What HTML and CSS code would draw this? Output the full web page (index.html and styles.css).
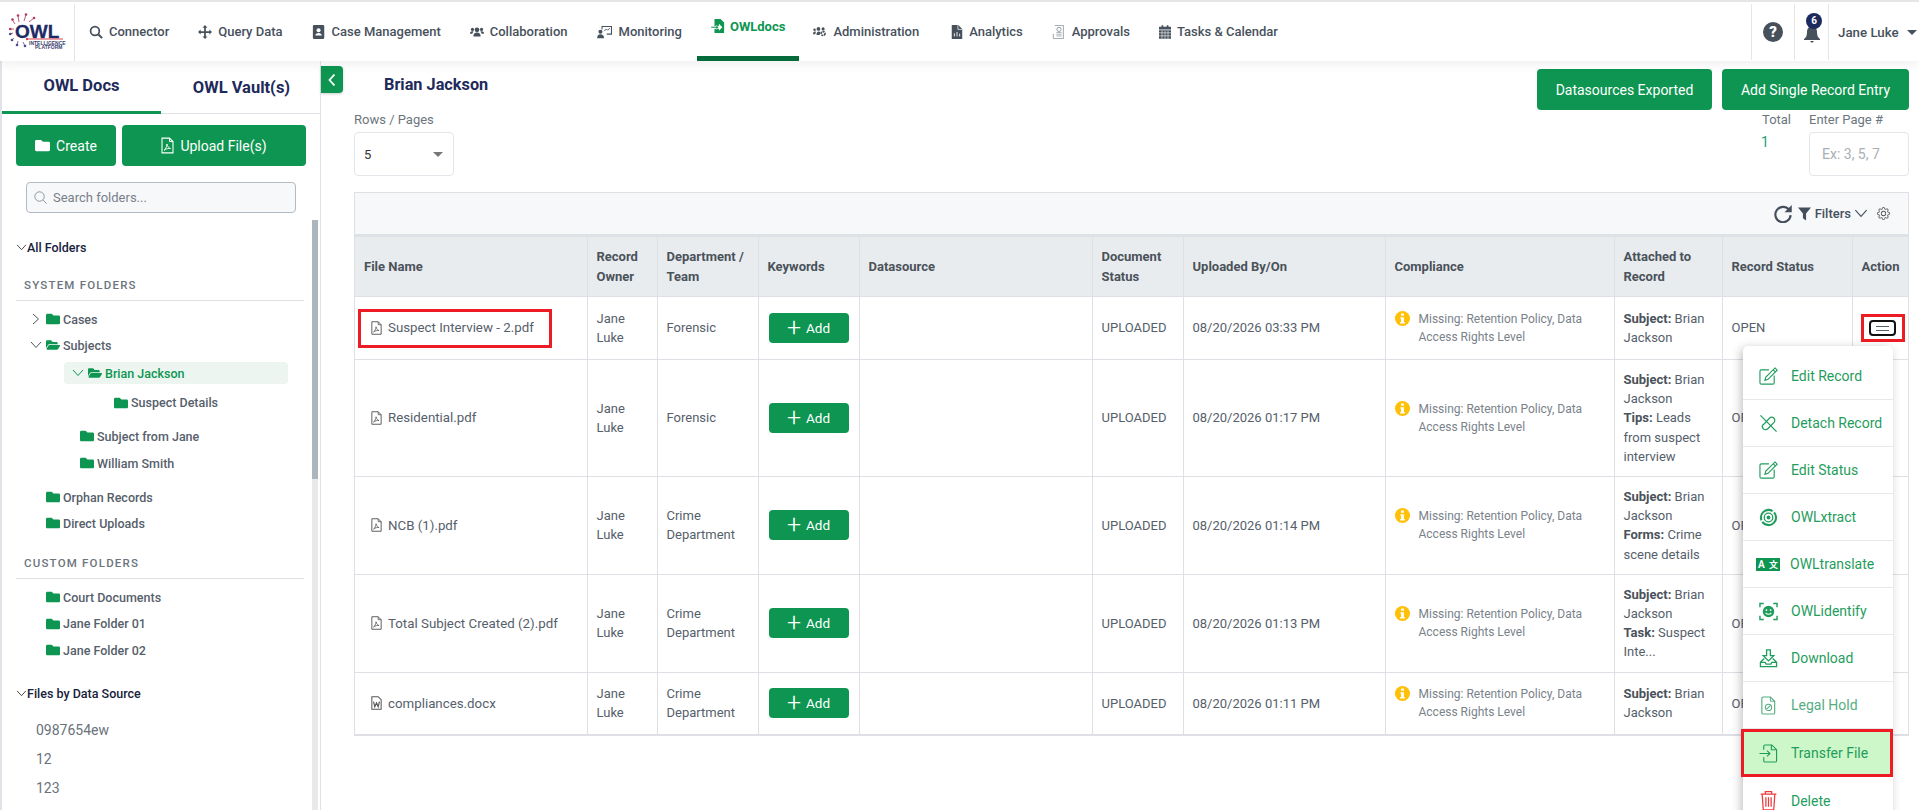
FILE: index.html
```html
<!DOCTYPE html>
<html lang="en">
<head>
<meta charset="utf-8">
<title>OWLdocs</title>
<link rel="stylesheet" href="styles.css">
</head>
<body>
<svg class="defs" aria-hidden="true">
  <symbol id="folder" viewBox="0 0 512 512"><path d="M464 128H272l-64-64H48C21.49 64 0 85.49 0 112v288c0 26.51 21.49 48 48 48h416c26.51 0 48-21.49 48-48V176c0-26.51-21.49-48-48-48z"/></symbol>
  <symbol id="folder-open" viewBox="0 0 576 512"><path d="M572.694 292.093L500.27 416.248A63.997 63.997 0 0 1 444.989 448H45.025c-18.523 0-30.064-20.093-20.731-36.093l72.424-124.155A64 64 0 0 1 152 256h399.964c18.523 0 30.064 20.093 20.73 36.093zM152 224h328v-48c0-26.51-21.49-48-48-48H272l-64-64H48C21.49 64 0 85.49 0 112v278.046l69.077-118.418C86.214 242.25 117.989 224 152 224z"/></symbol>
  <symbol id="chev-down" viewBox="0 0 12 8"><path d="M1 1l5 5.500L11 1" fill="none" stroke="currentColor" stroke-width="1"/></symbol>
  <symbol id="chev-right" viewBox="0 0 8 12"><path d="M1 1l5.500 5L1 11" fill="none" stroke="currentColor" stroke-width="1"/></symbol>
  <symbol id="pdf" viewBox="1.500 0 13 16"><path d="M2.500 .6h7.500l3.500 3.500v11.300h-11z" fill="none" stroke="currentColor" stroke-width="1.100"/><path d="M10 .6v3.500h3.500" fill="none" stroke="currentColor" stroke-width="1"/><path d="M4.500 12.800c1.500-1 2.500-3 3-6.300 .5 2.500 1.500 4 3.500 4.500-2-.3-4.500.2-6.500 1.800z" fill="none" stroke="currentColor" stroke-width=".9"/></symbol>
  <symbol id="word" viewBox="1.500 0 13 16"><path d="M2.500 .6h7.500l3.500 3.500v11.300h-11z" fill="none" stroke="currentColor" stroke-width="1.200"/><path d="M4.500 6.500l1.500 6 2-4.500 2 4.500 1.500-6" fill="none" stroke="currentColor" stroke-width="1.400"/></symbol>
  <symbol id="edit" viewBox="0 0 20 20"><g fill="none" stroke="currentColor" stroke-width="1.200"><path d="M10.500 3H2.500A1.500 1.500 0 0 0 1 4.500v12A1.500 1.500 0 0 0 2.500 18h12a1.500 1.500 0 0 0 1.500-1.500V9"/><path d="M16.800 1l2.300 2.300-9.600 9.700-3.300 1 1-3.300zM15 3l2.200 2.200"/></g></symbol>
  <symbol id="detach" viewBox="0 0 20 20"><g fill="none" stroke="currentColor" stroke-width="1.300"><path d="M5 11l6-6.500a3.200 3.200 0 0 1 4.800 4.300l-6.500 6.700a3.200 3.200 0 0 1-4.800-4.500z"/><path d="M1.500 1.500l17 17"/></g></symbol>
  <symbol id="xtract" viewBox="0 0 20 20"><g fill="none" stroke="currentColor"><circle cx="10" cy="10" r="8" stroke-width="2.200" stroke-dasharray="20 2"/><circle cx="10" cy="10" r="4.500" stroke-width="1.300"/></g><circle cx="10" cy="10" r="2"/></symbol>
  <symbol id="identify" viewBox="0 0 20 20"><path d="M1 5.500V1.500h4M15 1.500h4v4M19 14.500v4h-4M5 18.500H1v-4" fill="none" stroke="currentColor" stroke-width="1.500"/><circle cx="10" cy="10" r="6"/><g fill="#fff"><circle cx="7.800" cy="8.500" r="1"/><circle cx="12.200" cy="8.500" r="1"/></g><path d="M7 11.500c1.500 2 4.500 2 6 0" fill="none" stroke="#fff" stroke-width="1.100"/></symbol>
  <symbol id="download" viewBox="0 0 20 20"><path d="M8 1h4v6h3.500L10 12.500 4.500 7H8z" fill="none" stroke="currentColor" stroke-width="1.400"/><path d="M5.500 10L1.500 14v4.500h17V14l-4-4M1.500 14h5l1 2h5l1-2h5" fill="none" stroke="currentColor" stroke-width="1.400"/></symbol>
  <symbol id="hold" viewBox="0 0 16 20"><path d="M2.500 1h7.500l4.500 4.500v12a1.500 1.500 0 0 1-1.500 1.500h-10.500a1.500 1.500 0 0 1-1.500-1.500v-15a1.500 1.500 0 0 1 1.500-1.500z" fill="none" stroke="currentColor" stroke-width="1.200"/><path d="M10 1v4.500h4.500" fill="none" stroke="currentColor"/><circle cx="8" cy="12" r="3.300" fill="none" stroke="currentColor" stroke-width="1.100"/><path d="M5.800 14.200l4.400-4.400" stroke="currentColor" stroke-width="1.100"/></symbol>
  <symbol id="transfer" viewBox="0 0 20 20"><path d="M5 6V2.500A1.500 1.500 0 0 1 6.500 1h7l5 5v11.500a1.500 1.500 0 0 1-1.500 1.500h-10.500a1.500 1.500 0 0 1-1.500-1.500V14" fill="none" stroke="currentColor" stroke-width="1.200"/><path d="M13 1v5h5.500M0.500 10h11M8.500 7l3 3-3 3" fill="none" stroke="currentColor" stroke-width="1.200"/></symbol>
  <symbol id="trash" viewBox="0 0 16 20"><g fill="none" stroke="currentColor" stroke-width="1.200"><path d="M.5 4h15M5 4V1.500h6V4M2 4l1 15h10l1-15"/><path d="M5.500 7v9M8 7v9M10.500 7v9"/></g></symbol>
  <symbol id="info" viewBox="0 0 18 18"><circle cx="9" cy="9" r="8"/><path d="M7.500 3.800h3v2.400h-3zM6.800 7.600h3.700v5h1v1.700h-5v-1.700h1v-3.300h-.7z" fill="#fff"/></symbol>
</svg>

<header class="topbar">
  <div class="logo">
    <svg viewBox="0 0 56 38" class="logo-svg">
      <g fill="none" stroke="#a8325d" stroke-width=".8"><path d="M10 9L9 3M15 8l2-6.500M20 9l5-4M6 11L3.500 7M5 16H1"/></g>
      <g fill="none" stroke="#5a4a8e" stroke-width=".8"><path d="M4 20l-3 1M5 25l-2 2M9 28l-1 4M14 29l2 4"/></g>
      <g fill="#b63a5e"><circle cx="9" cy="2.500" r="1.300"/><circle cx="17" cy="1.500" r="1.300"/><circle cx="25" cy="5" r="1.300"/><circle cx="3.500" cy="6.500" r="1.300"/><circle cx="1.200" cy="16" r="1.300"/></g>
      <g fill="#4e4a8a"><circle cx="1.200" cy="21" r="1.300"/><circle cx="3" cy="27" r="1.300"/><circle cx="8" cy="32" r="1.300"/><circle cx="16" cy="33" r="1.300"/></g>
      <text x="6" y="25" class="logo-owl">OWL</text>
      <path d="M18 26H54" stroke="#d8434e" stroke-width="1"/>
      <circle cx="18" cy="26" r="1.200" fill="#d8434e"/>
      <text x="20" y="31.500" class="logo-small">INTELLIGENCE</text>
      <text x="26" y="36" class="logo-small">PLATFORM</text>
    </svg>
  </div>
  <nav class="nav">
    <a class="nav-item nav-connector"><svg class="nav-ico" viewBox="0 0 16 16"><circle cx="6.800" cy="6.800" r="5" fill="none" stroke="currentColor" stroke-width="2"/><path d="M10.500 10.500L15 15" stroke="currentColor" stroke-width="2.400"/></svg>Connector</a>
    <a class="nav-item"><svg class="nav-ico" viewBox="0 0 16 16"><path d="M8 0l2.800 3H9v4h4V5.200L16 8l-3 2.800V9H9v4h1.800L8 16l-2.800-3H7V9H3v1.800L0 8l3-2.800V7h4V3H5.200z"/></svg>Query Data</a>
    <a class="nav-item"><svg class="nav-ico" viewBox="0 0 14 16"><path d="M1.500 0h10A1.500 1.500 0 0 1 13 1.500v13a1.500 1.500 0 0 1-1.500 1.500h-10A1.500 1.500 0 0 1 0 14.500v-13A1.500 1.500 0 0 1 1.500 0z"/><circle cx="6.500" cy="6" r="2.300" fill="#fff"/><path d="M2.800 12c0-2 1.700-3 3.700-3s3.700 1 3.700 3z" fill="#fff"/></svg>Case Management</a>
    <a class="nav-item"><svg class="nav-ico" viewBox="0 0 16 12"><circle cx="8" cy="3.500" r="2.700"/><circle cx="2.800" cy="3" r="1.800"/><circle cx="13.200" cy="3" r="1.800"/><path d="M3.800 11c0-3 1.700-4.500 4.200-4.500s4.200 1.500 4.200 4.500zM0 8c0-2 1-2.800 2.800-2.800.5 0 1 .1 1.300.4C3.200 6.300 2.700 7 2.600 8zM16 8c0-2-1-2.800-2.800-2.800-.5 0-1 .1-1.300.4.900.7 1.400 1.400 1.500 2.400z"/></svg>Collaboration</a>
    <a class="nav-item"><svg class="nav-ico nav-ico-wide" viewBox="0 0 18 16"><path d="M5 1h12v10h-6V9.800h4.800V2.200H6.200V5H5z"/><path d="M8 7l2.500-2.500 1.500 1.500 2.500-2.500" fill="none" stroke="currentColor"/><circle cx="3.800" cy="7.800" r="2.300"/><path d="M0 15c0-3 1.500-4.500 3.800-4.500S8 12 8 15z"/></svg>Monitoring</a>
    <a class="nav-item nav-active"><svg class="nav-ico" viewBox="0 0 16 16"><path d="M4 0h7l4 4v12H4v-5h5v2.500L13 9.500l-4-4V8H4z"/><path d="M0 8.700h6V7l3 2.500-3 2.500v-1.700H0z" class="active-arrow"/></svg>OWLdocs</a>
    <a class="nav-item nav-admin"><svg class="nav-ico" viewBox="0 0 18 14"><circle cx="7" cy="3" r="2.400"/><circle cx="2" cy="4" r="1.600"/><path d="M0 10c0-2.500 1-3.500 2.500-3.500h1.200L3 10zM4.500 11c0-3 1-4.500 3-4.500 1 0 1.500.3 2 .8L8.500 11z"/><circle cx="13" cy="9" r="2.500" fill="none" stroke="currentColor" stroke-width="2.200" stroke-dasharray="2.500 .8"/><circle cx="13" cy="3" r="2"/></svg>Administration</a>
    <a class="nav-item"><svg class="nav-ico nav-ico-narrow" viewBox="0 0 12 16"><path d="M0 0h7.500L12 4.500V16H0z"/><path d="M7 0v5h5" fill="none" stroke="#fff" stroke-width=".8"/><path d="M3 13V9.500M6 13V8M9 13v-3" stroke="#fff"/></svg>Analytics</a>
    <a class="nav-item"><svg class="nav-ico nav-ico-gray" viewBox="0 0 14 16"><path d="M2 .5h10v15H.5V10" fill="none" stroke="currentColor" stroke-width=".9"/><circle cx="7" cy="5" r="2.400" fill="none" stroke="currentColor"/><path d="M4 8.500h6M4 10.500h6M4 12.500h6" stroke="currentColor" stroke-width=".8"/></svg>Approvals</a>
    <a class="nav-item"><svg class="nav-ico nav-ico-narrow" viewBox="0 0 14 16"><path d="M3 0h2v2h4V0h2v2h3v3H0V2h3zM0 6h14v10H0z"/><path d="M0 9h14M0 12.500h14M3.500 6v10M7 6v10M10.500 6v10" stroke="#fff" stroke-width=".7"/></svg>Tasks &amp; Calendar</a>
  </nav>
  <div class="top-right">
    <div class="top-cell help-cell"><span class="help">?</span></div>
    <div class="top-cell bell-cell">
      <svg class="bell" viewBox="0 0 16 18"><path d="M8 0c1 0 1.500.6 1.500 1.500C12 2.200 13 4.500 13 7c0 4 1 5.500 3 7v1H0v-1c2-1.500 3-3 3-7 0-2.500 1-4.800 3.500-5.500C6.500.6 7 0 8 0z"/><path d="M6 16h4l-2 2z"/></svg>
      <span class="badge">6</span>
    </div>
    <div class="top-cell user-cell">Jane Luke<span class="caret"></span></div>
  </div>
</header>

<div class="main">
  <aside class="sidebar">
    <div class="tabs">
      <div class="tab tab-active">OWL Docs</div>
      <div class="tab tab-other">OWL Vault(s)</div>
    </div>
    <div class="side-actions">
      <button class="btn btn-create"><svg class="btn-ico" viewBox="0 0 512 512"><use href="#folder"/></svg>Create</button>
      <button class="btn btn-upload"><svg class="btn-ico btn-ico-pdf"><use href="#pdf"/></svg>Upload File(s)</button>
    </div>
    <div class="side-search">
      <svg class="search-ico" viewBox="0 0 16 16"><circle cx="6.800" cy="6.800" r="5.800" fill="none" stroke="currentColor"/><path d="M11 11l4.500 4.500" stroke="currentColor"/></svg>
      <span>Search folders...</span>
    </div>
    <div class="tree-wrap">
      <div class="tree">
        <div class="tree-head head-all"><svg class="chev-head"><use href="#chev-down"/></svg>All Folders</div>
        <div class="section section-system">SYSTEM FOLDERS</div>
        <div class="row r26 mt5 pad-cases"><svg class="chev chev-r"><use href="#chev-right"/></svg><svg class="fld"><use href="#folder"/></svg>Cases</div>
        <div class="row r26 pad-subjects"><svg class="chev chev-d"><use href="#chev-down"/></svg><svg class="fld"><use href="#folder-open"/></svg>Subjects</div>
        <div class="row selected"><svg class="chev chev-d"><use href="#chev-down"/></svg><svg class="fld"><use href="#folder-open"/></svg>Brian Jackson</div>
        <div class="row r29 mt3 pad-deep"><svg class="fld"><use href="#folder"/></svg>Suspect Details</div>
        <div class="row r27 mt6 pad-child"><svg class="fld"><use href="#folder"/></svg>Subject from Jane</div>
        <div class="row r27 pad-child"><svg class="fld"><use href="#folder"/></svg>William Smith</div>
        <div class="row r26 mt8 pad-root"><svg class="fld"><use href="#folder"/></svg>Orphan Records</div>
        <div class="row r26 pad-root"><svg class="fld"><use href="#folder"/></svg>Direct Uploads</div>
        <div class="section section-custom">CUSTOM FOLDERS</div>
        <div class="row r26 mt5 pad-root"><svg class="fld"><use href="#folder"/></svg>Court Documents</div>
        <div class="row r27 pad-root"><svg class="fld"><use href="#folder"/></svg>Jane Folder 01</div>
        <div class="row r26 pad-root"><svg class="fld"><use href="#folder"/></svg>Jane Folder 02</div>
        <div class="tree-head head-files"><svg class="chev-head"><use href="#chev-down"/></svg>Files by Data Source</div>
        <div class="src first-src">0987654ew</div>
        <div class="src">12</div>
        <div class="src">123</div>
      </div>
      <div class="scroll-track"><div class="scroll-thumb"></div></div>
    </div>
  </aside>

  <section class="content">
    <button class="collapse" aria-label="Collapse"><svg viewBox="0 0 8 14"><path d="M6.500 1.500L1.500 7l5 5.500" fill="none" stroke="#fff" stroke-width="1.800"/></svg></button>
    <div class="head-row">
      <h1 class="title">Brian Jackson</h1>
      <div class="head-btns">
        <button class="btn btn-export">Datasources Exported</button>
        <button class="btn btn-add-record">Add Single Record Entry</button>
      </div>
    </div>
    <div class="filter-row">
      <div class="field">
        <label class="lbl">Rows / Pages</label>
        <div class="select"><span>5</span><span class="select-caret"></span></div>
      </div>
      <div class="pager">
        <div class="field total"><label class="lbl">Total</label><span class="total-val">1</span></div>
        <div class="field"><label class="lbl">Enter Page #</label><div class="page-input">Ex: 3, 5, 7</div></div>
      </div>
    </div>

    <div class="table-box">
      <div class="toolbar">
        <svg class="tool-ico tool-refresh" viewBox="0 0 16 16"><path d="M13.300 4.200A6.800 6.800 0 1 0 14.800 9" fill="none" stroke="currentColor" stroke-width="1.900"/><path d="M15.800 0v6.500h-6.500z"/></svg>
        <svg class="tool-ico tool-filter" viewBox="0 0 14 14"><path d="M0 0h14L8.700 6.500V14L5.300 11.500V6.500z"/></svg>
        <span class="tool-text">Filters</span>
        <svg class="tool-chev"><use href="#chev-down"/></svg>
        <svg class="tool-gear" viewBox="0 0 16 16"><path d="M8 4.754a3.246 3.246 0 1 0 0 6.492 3.246 3.246 0 0 0 0-6.492zM5.754 8a2.246 2.246 0 1 1 4.492 0 2.246 2.246 0 0 1-4.492 0z"/><path d="M9.796 1.343c-.527-1.790-3.065-1.790-3.592 0l-.094.319a.873.873 0 0 1-1.255.52l-.292-.16c-1.640-.892-3.433.902-2.540 2.541l.159.292a.873.873 0 0 1-.52 1.255l-.319.094c-1.790.527-1.790 3.065 0 3.592l.319.094a.873.873 0 0 1 .52 1.255l-.16.292c-.892 1.640.901 3.434 2.541 2.540l.292-.159a.873.873 0 0 1 1.255.52l.094.319c.527 1.790 3.065 1.790 3.592 0l.094-.319a.873.873 0 0 1 1.255-.52l.292.16c1.640.893 3.434-.902 2.540-2.541l-.159-.292a.873.873 0 0 1 .52-1.255l.319-.094c1.790-.527 1.790-3.065 0-3.592l-.319-.094a.873.873 0 0 1-.52-1.255l.16-.292c.893-1.640-.902-3.433-2.541-2.540l-.292.159a.873.873 0 0 1-1.255-.52l-.094-.319zm-2.633.283c.246-.835 1.428-.835 1.674 0l.094.319a1.873 1.873 0 0 0 2.693 1.115l.291-.16c.764-.415 1.600.42 1.184 1.185l-.159.292a1.873 1.873 0 0 0 1.116 2.692l.318.094c.835.246.835 1.428 0 1.674l-.319.094a1.873 1.873 0 0 0-1.115 2.693l.16.291c.415.764-.42 1.600-1.185 1.184l-.291-.159a1.873 1.873 0 0 0-2.693 1.116l-.094.318c-.246.835-1.428.835-1.674 0l-.094-.319a1.873 1.873 0 0 0-2.692-1.115l-.292.16c-.764.415-1.600-.42-1.184-1.185l.159-.291A1.873 1.873 0 0 0 1.945 8.930l-.319-.094c-.835-.246-.835-1.428 0-1.674l.319-.094A1.873 1.873 0 0 0 3.060 4.377l-.16-.292c-.415-.764.42-1.600 1.185-1.184l.292.159a1.873 1.873 0 0 0 2.692-1.115l.094-.319z"/></svg>
      </div>
      <table class="grid">
        <colgroup>
          <col class="c-file"><col class="c-owner"><col class="c-dept"><col class="c-key"><col class="c-ds"><col class="c-doc"><col class="c-up"><col class="c-comp"><col class="c-att"><col class="c-stat"><col class="c-act">
        </colgroup>
        <thead>
          <tr><th>File Name</th><th>Record Owner</th><th>Department / Team</th><th>Keywords</th><th>Datasource</th><th>Document Status</th><th>Uploaded By/On</th><th>Compliance</th><th>Attached to Record</th><th>Record Status</th><th>Action</th></tr>
        </thead>
        <tbody>
          <tr class="row-a">
            <td class="cell-file"><div class="file marked"><svg class="f-ico"><use href="#pdf"/></svg>Suspect Interview - 2.pdf</div></td>
            <td>Jane Luke</td><td>Forensic</td>
            <td><button class="btn btn-addk"><span class="plus">+</span>Add</button></td><td></td>
            <td>UPLOADED</td><td>08/20/2026 03:33 PM</td>
            <td><div class="comp"><svg class="info"><use href="#info"/></svg><span>Missing: Retention Policy, Data Access Rights Level</span></div></td>
            <td><b>Subject:</b> Brian Jackson</td><td>OPEN</td>
            <td class="cell-act"><span class="act-mark"><span class="act-btn"><i></i><i></i></span></span></td>
          </tr>
          <tr>
            <td class="cell-file"><div class="file"><svg class="f-ico"><use href="#pdf"/></svg>Residential.pdf</div></td>
            <td>Jane Luke</td><td>Forensic</td>
            <td><button class="btn btn-addk"><span class="plus">+</span>Add</button></td><td></td>
            <td>UPLOADED</td><td>08/20/2026 01:17 PM</td>
            <td><div class="comp"><svg class="info"><use href="#info"/></svg><span>Missing: Retention Policy, Data Access Rights Level</span></div></td>
            <td><b>Subject:</b> Brian Jackson<br><b>Tips:</b> Leads from suspect interview</td><td>OPEN</td><td></td>
          </tr>
          <tr>
            <td class="cell-file"><div class="file"><svg class="f-ico"><use href="#pdf"/></svg>NCB (1).pdf</div></td>
            <td>Jane Luke</td><td>Crime Department</td>
            <td><button class="btn btn-addk"><span class="plus">+</span>Add</button></td><td></td>
            <td>UPLOADED</td><td>08/20/2026 01:14 PM</td>
            <td><div class="comp"><svg class="info"><use href="#info"/></svg><span>Missing: Retention Policy, Data Access Rights Level</span></div></td>
            <td><b>Subject:</b> Brian Jackson<br><b>Forms:</b> Crime scene details</td><td>OPEN</td><td></td>
          </tr>
          <tr>
            <td class="cell-file"><div class="file"><svg class="f-ico"><use href="#pdf"/></svg>Total Subject Created (2).pdf</div></td>
            <td>Jane Luke</td><td>Crime Department</td>
            <td><button class="btn btn-addk"><span class="plus">+</span>Add</button></td><td></td>
            <td>UPLOADED</td><td>08/20/2026 01:13 PM</td>
            <td><div class="comp"><svg class="info"><use href="#info"/></svg><span>Missing: Retention Policy, Data Access Rights Level</span></div></td>
            <td><b>Subject:</b> Brian Jackson<br><b>Task:</b> Suspect Inte...</td><td>OPEN</td><td></td>
          </tr>
          <tr>
            <td class="cell-file"><div class="file"><svg class="f-ico"><use href="#word"/></svg>compliances.docx</div></td>
            <td>Jane Luke</td><td>Crime Department</td>
            <td><button class="btn btn-addk"><span class="plus">+</span>Add</button></td><td></td>
            <td>UPLOADED</td><td>08/20/2026 01:11 PM</td>
            <td><div class="comp"><svg class="info"><use href="#info"/></svg><span>Missing: Retention Policy, Data Access Rights Level</span></div></td>
            <td><b>Subject:</b> Brian Jackson</td><td>OPEN</td><td></td>
          </tr>
        </tbody>
      </table>
    </div>

    <ul class="menu">
      <li><svg class="m-ico"><use href="#edit"/></svg>Edit Record</li>
      <li><svg class="m-ico"><use href="#detach"/></svg>Detach Record</li>
      <li><svg class="m-ico"><use href="#edit"/></svg>Edit Status</li>
      <li><svg class="m-ico"><use href="#xtract"/></svg>OWLxtract</li>
      <li><span class="tr-ico"><span>A</span><span class="tr-zh">文</span></span>OWLtranslate</li>
      <li><svg class="m-ico"><use href="#identify"/></svg>OWLidentify</li>
      <li><svg class="m-ico"><use href="#download"/></svg>Download</li>
      <li class="m-muted"><svg class="m-ico"><use href="#hold"/></svg>Legal Hold</li>
      <li class="m-hot"><svg class="m-ico"><use href="#transfer"/></svg>Transfer File</li>
      <li><svg class="m-ico m-del"><use href="#trash"/></svg>Delete</li>
    </ul>
  </section>
</div>
</body>
</html>
```
FILE: styles.css
```css
* { box-sizing: border-box; }
html, body { margin: 0; height: 810px; overflow: hidden; }
body { font-family: Roboto, "Noto Sans", Arial, sans-serif; font-size: 13px; color: #56606b; background: #fff; }
.defs { display: none; }
button { font-family: inherit; }

.topbar { height: 61px; border-top: 2px solid #e6e6e6; display: flex; background: #fff; box-shadow: 0 4px 10px rgba(0,0,0,.06); position: relative; z-index: 2; }
.logo { width: 75px; margin-top: 2px; border-right: 1px solid #e4e6ea; padding: 9px 0 0 9px; }
.logo-svg { width: 56px; height: 38px; display: block; overflow: visible; }
.logo-owl { font: 700 19px "Liberation Sans", Arial, sans-serif; fill: #1e2a63; stroke: #1e2a63; stroke-width: .3px; }
.logo-small { font: 700 5px "Liberation Sans Narrow", "Liberation Sans", Arial, sans-serif; fill: #3c3f70; }

.nav { flex: 1; display: flex; padding-left: 14px; }
.nav-item { display: flex; align-items: center; height: 59px; margin-right: 29px; font-weight: 500; font-size: 13px; color: #47515c; white-space: nowrap; }
.nav-ico { width: 14px; height: 14px; margin-right: 6px; fill: currentColor; flex: none; }
.nav-ico-wide { width: 16px; margin-right: 6px; }
.nav-ico-narrow { width: 12px; }
.nav-ico-gray { color: #8b9198; }
.nav-active { margin: 0 14px 0 -14px; padding: 0 14px 6px; border-bottom: 5px solid #056b3a; color: #0d9551; font-weight: 700; }
.nav-active .nav-ico { height: 16px; margin-right: 5px; }
.nav-admin { margin-right: 32px; }
.active-arrow { stroke: #fff; stroke-width: .5; }

.top-right { display: flex; height: 56px; margin-top: 2px; }
.top-cell { border-left: 1px solid #e4e6ea; display: flex; align-items: center; position: relative; }
.help-cell { width: 43px; justify-content: center; }
.help { width: 20px; height: 20px; border-radius: 50%; background: #47515c; color: #fff; font-weight: 900; font-size: 15px; line-height: 20px; text-align: center; }
.bell-cell { width: 34px; justify-content: center; }
.bell { width: 16px; height: 18px; fill: #47515c; margin-top: 4px; }
.badge { position: absolute; left: 11px; top: 9px; width: 16px; height: 16px; border-radius: 50%; background: #1d2a5e; color: #fff; font-size: 10px; font-weight: 700; line-height: 16px; text-align: center; }
.user-cell { width: 91px; padding-left: 9px; font-weight: 500; font-size: 13.300px; color: #47515c; }
.caret { width: 0; height: 0; margin-left: 8px; border: 5px solid transparent; border-top-color: #47515c; border-bottom: 0; }

.main { display: grid; grid-template-columns: 321px 1fr; height: 749px; }

.sidebar { border-left: 2px solid #dfe3e7; border-right: 1px solid #dfe3e7; display: flex; flex-direction: column; min-height: 0; overflow: hidden; }
.tabs { height: 53px; display: flex; border-bottom: 1px solid #dfe3e7; flex: none; }
.tab { width: 159px; text-align: center; font-size: 16.500px; font-weight: 700; color: #1e2a5a; }
.tab-active { height: 53px; padding-top: 15px; border-bottom: 3px solid #0d9551; }
.tab-other { padding: 17px 0 0 2px; }
.side-actions { display: flex; gap: 6px; padding: 11px 0 0 14px; flex: none; }
.btn { border: 0; border-radius: 4px; background: #0d9551; color: #fff; font-size: 14px; display: flex; align-items: center; justify-content: center; padding: 0; }
.btn-create { width: 100px; height: 41px; }
.btn-upload { width: 184px; height: 41px; }
.btn-ico { width: 15px; height: 15px; margin-right: 6px; fill: #fff; }
.btn-ico-pdf { fill: none; color: #fff; height: 17px; width: 13px; }
.side-search { margin: 16px 0 0 24px; width: 270px; height: 31px; flex: none; border: 1px solid #b4bac1; border-radius: 4px; background: #f7f8fa; display: flex; align-items: center; padding-left: 7px; color: #77808a; font-size: 13px; }
.search-ico { width: 13px; height: 13px; margin-right: 6px; color: #77808a; }

.tree-wrap { flex: 1; min-height: 0; display: flex; margin-top: 7px; overflow: hidden; }
.tree { width: 310px; padding-left: 14px; flex: none; }
.scroll-track { width: 6px; background: #e8e9ea; flex: none; }
.scroll-thumb { height: 259px; background: #adb5bd; }
.tree-head { height: 18px; display: flex; align-items: center; color: #17223b; font-size: 12.500px; font-weight: 500; }
.head-all { margin-top: 18px; }
.head-files { margin-top: 21px; }
.chev-head { width: 11px; height: 7px; color: #333; flex: none; }
.section { height: 23px; padding-left: 8px; border-bottom: 1px solid #dfe0e6; width: 288px; font-size: 11.500px; font-weight: 500; letter-spacing: 1.200px; color: #6c757d; line-height: 14px; }
.section-system { margin-top: 22px; }
.section-custom { margin-top: 20px; }
.row { display: flex; align-items: center; color: #56606b; font-size: 12.500px; font-weight: 500; }
.r26 { height: 26px; } .r27 { height: 27px; } .r29 { height: 29px; }
.mt3 { margin-top: 4px; } .mt5 { margin-top: 5px; } .mt6 { margin-top: 5.500px; } .mt8 { margin-top: 7.500px; }
.fld { width: 14px; height: 14px; fill: #0d9551; margin-right: 3px; flex: none; }
.chev { flex: none; }
.chev-r { width: 8px; height: 12px; margin-right: 6px; color: #555; }
.chev-d { width: 12px; height: 8px; margin-right: 4px; color: #555; }
.pad-cases { padding-left: 16px; }
.pad-subjects { padding-left: 14px; }
.selected { margin: 4px 0 0 48px; width: 224px; height: 22px; padding-left: 8px; background: #ecf5f0; border-radius: 4px; color: #0d9551; }
.selected .chev-d { color: #0d9551; }
.pad-deep { padding-left: 98px; }
.pad-child { padding-left: 64px; }
.pad-root { padding-left: 30px; }
.src { height: 29px; padding-left: 20px; line-height: 29px; font-size: 14px; color: #6a727b; }
.first-src { margin-top: 14px; }

.content { position: relative; padding: 8px 10px 0 33px; min-width: 0; }
.collapse { position: absolute; left: 0; top: 5px; width: 22px; height: 27px; border: 0; border-radius: 0 4px 4px 0; background: #0d9551; padding: 0 0 0 7px; box-shadow: 0 1px 3px rgba(0,0,0,.2); }
.collapse svg { width: 8px; height: 14px; display: block; }
.head-row { display: flex; justify-content: space-between; height: 42px; }
.title { margin: 6px 0 0 30px; font-size: 16.300px; font-weight: 700; color: #1e2a5a; line-height: 20px; }
.head-btns { display: flex; gap: 10px; }
.btn-export { width: 175px; height: 41px; }
.btn-add-record { width: 187px; height: 41px; }
.filter-row { display: flex; justify-content: space-between; height: 81px; }
.field { display: flex; flex-direction: column; }
.lbl { height: 21px; line-height: 18px; color: #6c757d; font-size: 13px; }
.select { width: 100px; height: 44px; border: 1px solid #e3e6ea; border-radius: 4px; display: flex; align-items: center; justify-content: space-between; padding: 0 10px 0 9px; color: #333; }
.select-caret { width: 0; height: 0; border: 5px solid transparent; border-top-color: #777; border-bottom: 0; }
.pager { display: flex; gap: 16px; }
.total { width: 31px; }
.total-val { color: #1f9d7a; font-size: 14px; line-height: 20px; margin-left: -1px; }
.page-input { width: 100px; height: 44px; border: 1px solid #e3e6ea; border-radius: 4px; color: #a9aeb4; display: flex; align-items: center; padding-left: 12px; font-size: 14px; }

.table-box { width: 1555px; border: 1px solid #dfe0e6; border-width: 1px 1px 2px; }
.toolbar { height: 41px; background: #f7f8fa; display: flex; align-items: center; justify-content: flex-end; padding: 0 18px 0 0; color: #454f5b; }
.tool-ico { fill: currentColor; flex: none; }
.tool-refresh { width: 18px; height: 18px; margin-right: 6px; }
.tool-filter { width: 13px; height: 14px; margin-right: 4px; }
.tool-text { font-size: 13px; font-weight: 500; margin-right: 3px; }
.tool-chev { width: 14px; height: 9px; margin-right: 9px; }
.tool-gear { width: 13px; height: 13px; fill: #555; }

.grid { width: 100%; table-layout: fixed; border-collapse: collapse; font-size: 13px; line-height: 19.200px; }
.c-file { width: 232px; } .c-owner { width: 70px; } .c-dept { width: 101px; } .c-key { width: 101px; }
.c-ds { width: 233px; } .c-doc { width: 91px; } .c-up { width: 202px; } .c-comp { width: 229px; }
.c-att { width: 108px; } .c-stat { width: 130px; } .c-act { width: 56px; }
.grid th { background: #e9ecef; border-top: 3px solid #dee2e6; border-right: 1px solid #dfe0e6; height: 61px; padding: 0 9px; text-align: left; font-weight: 700; color: #4a525a; line-height: 20px; }
.grid td { border: 1px solid #dfe0e6; border-left: 0; height: 62px; padding: 10px 9px; color: #56606b; vertical-align: middle; }
.grid td:last-child, .grid th:last-child { border-right: 0; }
.grid tbody tr:last-child td { border-bottom: 0; }
.grid td b { font-weight: 700; color: #4a525a; }
.row-a td { height: 63px; }
.cell-file.cell-file { padding: 0 0 0 3px; }
.file { display: flex; align-items: center; height: 39px; padding-left: 13px; font-size: 13.300px; }
.marked { width: 194px; border: 3px solid #ed1c24; padding-left: 10px; }
.f-ico { width: 11px; height: 14px; margin-right: 6px; color: #555; flex: none; }
.btn-addk { width: 80px; height: 30px; margin-left: 1px; font-size: 13.500px; font-weight: 400; }
.plus { font-size: 25px; font-weight: 300; line-height: 22px; margin-right: 5px; }
.comp { display: flex; align-items: flex-start; margin: 0 0 0 -1px; font-size: 12px; line-height: 18px; color: #7a828a; }
.info { width: 17px; height: 17px; fill: #ffc107; margin: 0 8px 0 0; flex: none; }
.cell-act.cell-act { padding: 0; }
.act-mark { display: flex; width: 44px; height: 28px; margin-left: 8px; border: 3px solid #ed1c24; align-items: center; justify-content: center; }
.act-btn { width: 27px; height: 16px; border: 2px solid #111; border-radius: 4px; display: flex; flex-direction: column; align-items: center; justify-content: center; gap: 3px; }
.act-btn i { width: 13px; height: 1px; background: #56606b; display: block; }

.menu { position: absolute; left: 1422px; top: 285px; width: 150px; margin: 0; padding: 7px 0 0; list-style: none; background: #fff; border-radius: 5px; box-shadow: -2px 2px 10px rgba(0,0,0,.25); }
.menu li { height: 47px; display: flex; align-items: center; padding-left: 16px; border-bottom: 1px solid #e6e8ec; color: #1f9d5c; font-size: 14px; }
.m-ico { width: 19px; height: 19px; margin-right: 13px; fill: #1f9d5c; color: #1f9d5c; flex: none; }
.tr-ico { width: 24px; height: 13px; margin: 0 10px 0 -3px; flex: none; background: #0d9551; color: #fff; font-size: 10px; line-height: 13px; font-weight: 700; display: flex; justify-content: space-around; }
.tr-zh { font-family: "Noto Sans CJK SC", sans-serif; font-size: 9px; }
.menu .m-muted { color: #55ad82; }
.m-muted .m-ico { fill: #55ad82; color: #55ad82; }
.menu .m-hot { margin-left: -2px; height: 48px; padding-left: 15px; background: #cdf7c8; border: 3px solid #ed1c24; }
.menu li:last-child { border-bottom: 0; }
.m-ico.m-del { color: #ed3b3b; fill: none; height: 21px; }
```
